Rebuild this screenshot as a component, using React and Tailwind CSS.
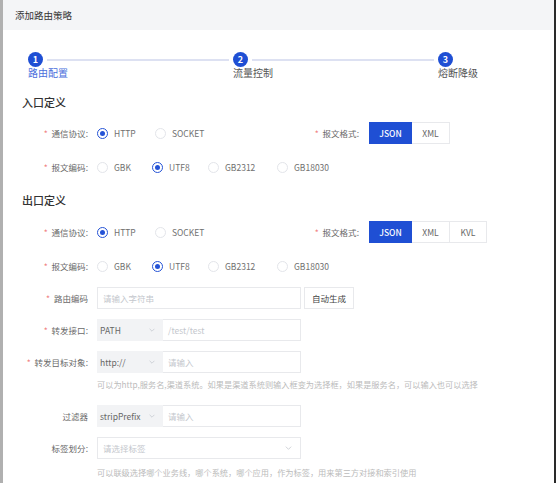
import React from "react";

const F = { fontFamily: '"Noto Sans CJK SC", "Noto Sans", sans-serif' };

function Radio({ checked, label, w }) {
  return (
    <div className={`flex items-center ${w || ""}`}>
      <span
        className={`flex items-center justify-center w-[11px] h-[11px] rounded-full border ${
          checked ? "border-[#2553d6]" : "border-[#e3e5ea]"
        }`}
      >
        {checked && <span className="w-[5px] h-[5px] rounded-full bg-[#2553d6]" />}
      </span>
      <span className="ml-[6px] text-[8.5px] text-[#707070]">{label}</span>
    </div>
  );
}

function Label({ text, req = true, colon = true, w = "w-[85px]" }) {
  return (
    <div className={`${w} shrink-0 text-right text-[8.5px] text-[#6a6a6a] whitespace-nowrap`}>
      {req && <span className="text-[#f08080] mr-[4px]">*</span>}
      {text}
      {colon ? ":" : ""}
    </div>
  );
}

function Seg({ items }) {
  return (
    <div className="flex h-[22px]">
      {items.map((it, i) => (
        <div
          key={it.t}
          className={`${it.w} flex items-center justify-center text-[8.5px] ${
            i === 0
              ? "bg-[#1f4fd4] text-white font-medium"
              : "bg-white text-[#666] border border-l-0 border-[#e8e9ec]"
          }`}
        >
          {it.t}
        </div>
      ))}
    </div>
  );
}

function Chevron({ cls }) {
  return (
    <svg viewBox="0 0 10 6" className={cls} fill="none" stroke="#b8bcc4" strokeWidth="1">
      <path d="M1 1l4 4 4-4" />
    </svg>
  );
}

function Steps() {
  const Circle = ({ n }) => (
    <div className="w-[15px] shrink-0 flex flex-col items-start">
      <div className="w-[15px] h-[15px] rounded-full bg-[#1f4fd4] text-white text-[9px] font-bold flex items-center justify-center leading-none">
        {n}
      </div>
    </div>
  );
  return (
    <div className="mt-[22px] ml-[25px] w-[425px]">
      <div className="flex items-center">
        <Circle n="1" />
        <div className="flex-1 h-[2px] bg-[#dde1f2] mx-[4px]" />
        <Circle n="2" />
        <div className="flex-1 h-[2px] bg-[#dde1f2] mx-[4px]" />
        <Circle n="3" />
      </div>
      <div className="flex h-[12px]">
        <div className="w-[15px] shrink-0 whitespace-nowrap text-[10px] leading-[12px] text-[#4b6fdc]">路由配置</div>
        <div className="flex-1 mx-[4px]" />
        <div className="w-[15px] shrink-0 whitespace-nowrap text-[10px] leading-[12px] text-[#555]">流量控制</div>
        <div className="flex-1 mx-[4px]" />
        <div className="w-[15px] shrink-0 whitespace-nowrap text-[10px] leading-[12px] text-[#555]">熔断降级</div>
      </div>
    </div>
  );
}

function SelectInput({ sel, ph }) {
  return (
    <div className="ml-[9px] flex w-[204px] h-[22px]">
      <div className="w-[66px] bg-[#f2f3f5] flex items-center justify-between px-[3px] pr-[8px]">
        <span className="text-[8.5px] text-[#666]">{sel}</span>
        <Chevron cls="w-[6px] h-[4px]" />
      </div>
      <div className="flex-1 border border-l-0 border-[#e8e9ec] flex items-center px-[5px] text-[8.5px] text-[#c4c7cd]">
        {ph}
      </div>
    </div>
  );
}

export default function App() {
  return (
    <div
      style={F}
      className="w-[556px] h-[483px] overflow-hidden bg-white border-l-[3px] border-l-[#b0b0b0] border-r-2 border-r-[#2a2a2a] flex flex-col"
    >
      <div className="h-[30px] shrink-0 bg-[#f4f5f7] flex items-center pl-[12px] text-[9.5px] text-[#333]">
        添加路由策略
      </div>

      <Steps />

      <div className="mt-[15px] ml-[19px] h-[16px] flex items-center text-[11px] font-medium text-[#333]">入口定义</div>

      <div className="mt-[12px] h-[22px] flex items-center">
        <Label text="通信协议" />
        <div className="ml-[9px] w-[180px] flex items-center">
          <Radio checked label="HTTP" w="w-[58px]" />
          <Radio label="SOCKET" />
        </div>
        <Label text="报文格式" w="w-[82px]" />
        <div className="ml-[10px]">
          <Seg items={[{ t: "JSON", w: "w-[43px]" }, { t: "XML", w: "w-[38px]" }]} />
        </div>
      </div>

      <div className="mt-[12px] h-[22px] flex items-center">
        <Label text="报文编码" />
        <div className="ml-[9px] flex items-center">
          <Radio label="GBK" w="w-[55px]" />
          <Radio checked label="UTF8" w="w-[56px]" />
          <Radio label="GB2312" w="w-[69px]" />
          <Radio label="GB18030" />
        </div>
      </div>

      <div className="mt-[14px] ml-[19px] h-[16px] flex items-center text-[11px] font-medium text-[#333]">出口定义</div>

      <div className="mt-[13px] h-[22px] flex items-center">
        <Label text="通信协议" />
        <div className="ml-[9px] w-[180px] flex items-center">
          <Radio checked label="HTTP" w="w-[58px]" />
          <Radio label="SOCKET" />
        </div>
        <Label text="报文格式" w="w-[82px]" />
        <div className="ml-[10px]">
          <Seg
            items={[
              { t: "JSON", w: "w-[43px]" },
              { t: "XML", w: "w-[38px]" },
              { t: "KVL", w: "w-[37px]" },
            ]}
          />
        </div>
      </div>

      <div className="mt-[12px] h-[22px] flex items-center">
        <Label text="报文编码" />
        <div className="ml-[9px] flex items-center">
          <Radio label="GBK" w="w-[55px]" />
          <Radio checked label="UTF8" w="w-[56px]" />
          <Radio label="GB2312" w="w-[69px]" />
          <Radio label="GB18030" />
        </div>
      </div>

      <div className="mt-[10px] h-[22px] flex items-center">
        <Label text="路由编码" colon={false} />
        <div className="ml-[9px] w-[204px] h-[22px] border border-[#e8e9ec] flex items-center px-[5px] text-[8.5px] text-[#c4c7cd]">
          请输入字符串
        </div>
        <div className="ml-[3px] w-[50px] h-[22px] border border-[#e8e9ec] flex items-center justify-center text-[8.5px] text-[#444]">
          自动生成
        </div>
      </div>

      <div className="mt-[10px] h-[22px] flex items-center">
        <Label text="转发接口" />
        <SelectInput sel="PATH" ph="/test/test" />
      </div>

      <div className="mt-[10px] h-[22px] flex items-center">
        <Label text="转发目标对象" />
        <SelectInput sel="http://" ph="请输入" />
      </div>

      <div className="mt-[5px] ml-[94px] h-[12px] flex items-center text-[8.2px] text-[#bbbbbb] whitespace-nowrap">
        可以为http,服务名,渠道系统。如果是渠道系统则输入框变为选择框，如果是服务名，可以输入也可以选择
      </div>

      <div className="mt-[15px] h-[22px] flex items-center">
        <Label text="过滤器" req={false} colon={false} />
        <SelectInput sel="stripPrefix" ph="请输入" />
      </div>

      <div className="mt-[10px] h-[22px] flex items-center">
        <Label text="标签划分" req={false} />
        <div className="ml-[9px] w-[204px] h-[22px] border border-[#e8e9ec] flex items-center justify-between px-[5px] pr-[8px] text-[8.5px] text-[#c4c7cd]">
          <span>请选择标签</span>
          <Chevron cls="w-[7px] h-[4px]" />
        </div>
      </div>

      <div className="mt-[7px] ml-[94px] h-[12px] flex items-center text-[8.2px] text-[#bbbbbb] whitespace-nowrap">
        可以联级选择哪个业务线，哪个系统，哪个应用，作为标签，用来第三方对接和索引使用
      </div>
    </div>
  );
}
